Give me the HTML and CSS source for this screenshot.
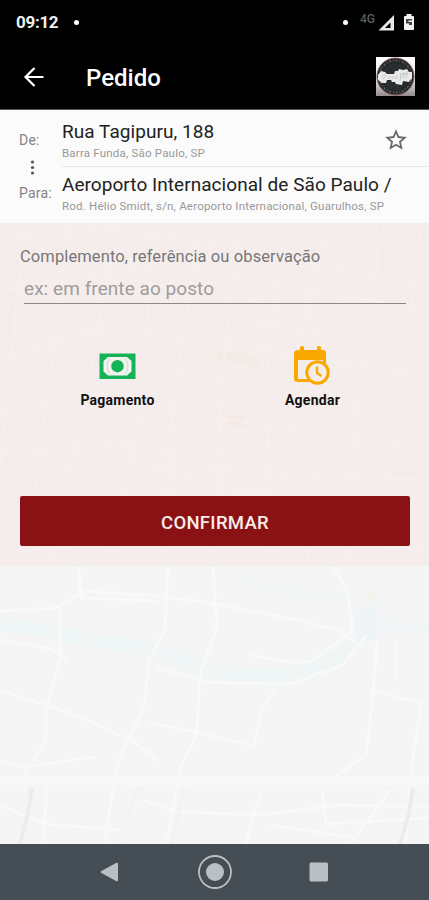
FILE: index.html
```html
<!DOCTYPE html>
<html lang="pt-BR">
<head>
    <meta charset="UTF-8">
    <meta name="viewport" content="width=device-width, initial-scale=1.0">
    <title>Pedido</title>
    <link rel="stylesheet" href="styles.css">
</head>
<body>
    <div class="status-bar">
        <span class="clock">09:12</span>
        <span class="dot"></span>
        <div class="status-icons">
            <span class="dot"></span>
            <span class="network">4G</span>
            <svg class="signal" width="17" height="17" viewBox="0 0 17 17">
                <path d="M.5 16.500 16 1V16.500Z" fill="#e8e8e8"/>
                <path d="M7 14 12.500 8.500V14Z" fill="#000"/>
            </svg>
            <svg class="battery" width="12" height="18" viewBox="0 0 12 18">
                <path d="M3.500 1h5v2H10q1 0 1 1v12q0 1-1 1H2q-1 0-1-1V4q0-1 1-1h1.500Z" fill="#f2f2f2"/>
                <path d="M3 6h6v1.500H5.500V9H9v3H6v-1.500H3Z" fill="#444"/>
            </svg>
        </div>
    </div>

    <header class="app-bar">
        <svg class="back" width="24" height="24" viewBox="0 0 24 24" fill="none" stroke="#fff" stroke-width="2.2">
            <path d="M21.500 12H3.500M12.500 3 3.500 12l9 9"/>
        </svg>
        <h1>Pedido</h1>
        <svg class="logo" width="39" height="39" viewBox="0 0 39 39">
            <defs>
                <linearGradient id="logoBg" x1="0" y1="0" x2="0" y2="1">
                    <stop offset="0" stop-color="#fff"/>
                    <stop offset=".6" stop-color="#ddd"/>
                    <stop offset="1" stop-color="#928b8d"/>
                </linearGradient>
            </defs>
            <rect width="39" height="39" fill="url(#logoBg)"/>
            <circle cx="19.500" cy="19.500" r="18.500" fill="#25282a" stroke="#84515a"/>
            <circle cx="19.500" cy="19.500" r="16" fill="none" stroke="#5d6163" stroke-width="1.500" stroke-dasharray="2 1.500 1 2" stroke-dashoffset="3"/>
            <circle cx="19.500" cy="19.500" r="13.500" fill="#292d2f"/>
            <path d="M2 18l3-4 4 1 2 2 7 0 1-3 3 0 1-2 4 1 4-1 2 3 3 0 0 7-2 1-1 2-6-1-1 4-6-1-1-2-3 0-1-2-4 0-1 3-4 0-4-3Z" fill="#e9e9e9"/>
            <path d="M6 20q3-4 4-1l-3 3m6-3v3m3-3v3m2-3 2 3 2-3m3-2-1 7m4-9-1 6m4-7-1 7m-6-4h8" fill="none" stroke="#bbbdbe" stroke-width=".8"/>
        </svg>
    </header>

    <main class="content">
        <!-- street map behind the order form -->
        <svg class="map" width="429" height="734" viewBox="0 0 429 734" fill="none">
            <g class="water">
                <path d="M0 515C40 516 68 528 100 532S160 537 186 552C230 571 285 568 316 558Q340 548 358 528" stroke-width="15"/>
                <path d="M355 503q8-8 23-10v37q-15 3-25-5Z" fill="#eff5f6" stroke="none"/>
                <path d="M230 465Q290 487 350 486" stroke-width="8" opacity=".5"/>
                <path d="M375 515l54 3" stroke-width="13" opacity=".7"/>
            </g>
            <path d="M362 487l15-10-3 14-12 5Z" fill="#f1f5ee"/>
            <path d="M226 306l18-2 4 11-16 3Z" fill="#eee6c8"/>
            <path d="M215 240l48 6-5 11-44-8Z" fill="#f2e9d5"/>
            <g class="streets">
                <path d="M0 501l55-3 30-17 60 4 60 7 88 17 44 11 26 18"/>
                <path d="M168 457l-3 63-16 30-5 47-26 55-14 82M213 457l4 60-16 44-5 66-15 29-14 78"/>
                <path d="M79 457l2 31 78 3M60 498v50l-14 53v29l-20 32-2 20M2 530l50 9 15 11"/>
                <path d="M0 580l76 25 57 26 25 20M0 651l24 6 70-10M150 613l50 10 54 13 8-38 18-26"/>
                <path d="M156 558l53 14 80 2 52-18 26-31M377 530l-4 54-7 60-39 29M334 457l14 26 5 41"/>
                <path d="M370 580l51 13-10 70-6 71M396 531v40M250 545l40 7 20 0 42-30"/>
                <path d="M0 695l45 19 75 6M140 690l40 12 80 3 80-10 89 2M262 677l-16 57M322 682l4 32 103-6"/>
                <path d="M47 678l-4 56M270 715l80 12M390 680l-40 54"/>
            </g>
            <path class="avenue" d="M0 671h429"/>
            <path class="rail" d="M32 678l-4 25-8 31M413 678l-4 25-9 31"/>
            <path class="rail rail-thin" d="M137 676l-16 58M184 678l-12 56"/>
            <g class="blocks">
                <path d="M0 128l110-9 120 18 199 40M0 181l160-28 120 24 149 22M0 250l100-33 140 19 189 32"/>
                <path d="M0 300l90-16 170 31 169 25M0 345l110-11 140 30 179 6M0 397l210-20 219 28M0 442l160-12 269 8"/>
                <path d="M25 114L0 360M70 114L25 456M114 114L88 280 48 456M155 114l-14 177-31 165M201 114l-28 178-8 164"/>
                <path d="M239 114l-17 150-8 192M285 114l-19 160 7 182M330 114l-35 132 14 210M383 114l-29 193-5 149M421 114l-22 192-18 150"/>
                <path d="M130 310l78 16M125 330l75 15M121 350l72 15M250 210l70 15M249 190l64 14M315 290l75 14"/>
            </g>
            <g class="creek">
                <path d="M380 114l8 110-6 130M300 300l4 80M245 335l30 12 154 19M0 270l15-90"/>
            </g>
        </svg>

        <section class="route">
            <div class="route-labels">
                <span>De:</span>
                <svg width="5" height="17" viewBox="0 0 5 17" fill="#555">
                    <circle cx="2.500" cy="3" r="1.600"/>
                    <circle cx="2.500" cy="8.500" r="1.600"/>
                    <circle cx="2.500" cy="14" r="1.600"/>
                </svg>
                <span>Para:</span>
            </div>
            <div class="stops">
                <div class="stop origin">
                    <div>
                        <h2>Rua Tagipuru, 188</h2>
                        <p>Barra Funda, São Paulo, SP</p>
                    </div>
                    <svg class="star" width="26" height="26" viewBox="0 0 24 24" fill="#666">
                        <path d="M22 9.240l-7.190-.620L12 2 9.190 8.630 2 9.240l5.460 4.730L5.820 21 12 17.270 18.180 21l-1.630-7.030L22 9.240zM12 15.400l-3.760 2.270 1-4.280-3.320-2.880 4.380-.380L12 6.100l1.710 4.040 4.380.380-3.320 2.880 1 4.280L12 15.400z"/>
                    </svg>
                </div>
                <div class="stop destination">
                    <h2>Aeroporto Internacional de São Paulo /</h2>
                    <p>Rod. Hélio Smidt, s/n, Aeroporto Internacional, Guarulhos, SP</p>
                </div>
            </div>
        </section>

        <section class="order-form">
            <label for="note">Complemento, referência ou observação</label>
            <input id="note" type="text" placeholder="ex: em frente ao posto">
            <div class="options">
                <div class="option">
                    <svg width="44" height="44" viewBox="0 0 44 44">
                        <path d="M3.500 10.500h36v25.500h-36Z" fill="#15b357"/>
                        <path d="M12 14h19l4.500 4v10.500l-4.500 4H12l-4.500-4V18Z" fill="#f5f3ee"/>
                        <path d="M14 15q-6 8 0 16.500M29 15q6 8 0 16.500" fill="none" stroke="#b9e3c7"/>
                        <circle cx="21.500" cy="23.200" r="6.200" fill="#15b357"/>
                    </svg>
                    <span>Pagamento</span>
                </div>
                <div class="option">
                    <svg width="44" height="44" viewBox="0 0 44 44">
                        <path d="M9 4q2-2 4 0v3h13V4q2-2 4 0v3h2q3 0 3 3v11h-3v-4H7v19h11v3H7q-4 0-4-3V11q0-4 4-4h2Z" fill="#f8a800"/>
                        <circle cx="26.500" cy="29.500" r="10.700" fill="#f7ecea" stroke="#f8a800" stroke-width="3"/>
                        <path d="M26 23.500v6.500l4.500 3" fill="none" stroke="#f8a800" stroke-width="2.300"/>
                    </svg>
                    <span>Agendar</span>
                </div>
            </div>
            <button class="confirm" type="button">CONFIRMAR</button>
        </section>
    </main>

    <nav class="system-nav">
        <svg width="429" height="56" viewBox="0 0 429 56" fill="#b9c0c5">
            <path d="M101.500 27 116 19q2-1 2 1v16q0 2-2 1l-14.500-8q-2-1 0-2Z"/>
            <circle cx="215" cy="28" r="9"/>
            <circle cx="215" cy="28" r="16" fill="none" stroke="#b9c0c5" stroke-width="1.800"/>
            <rect x="309.500" y="18.500" width="18.500" height="19" rx="1.500"/>
        </svg>
    </nav>
</body>
</html>
```
FILE: styles.css
```css
* {
    margin: 0;
    padding: 0;
    box-sizing: border-box;
    font-family: Roboto, "Liberation Sans", sans-serif;
}
body {
    display: flex;
    flex-direction: column;
    height: 900px;
    background: #f5f5f5;
    color: #222;
    overflow: hidden;
}
.status-bar {
    display: flex;
    align-items: center;
    height: 44px;
    padding: 0 14px 0 16px;
    background: #000;
    color: #f0f0f0;
}
.clock {
    width: 42px;
    font-size: 17px;
    font-weight: 700;
    letter-spacing: -0.3px;
}
.dot {
    width: 5px;
    height: 5px;
    margin-left: 16px;
    border-radius: 50%;
    background: #fff;
}
.status-icons {
    display: flex;
    align-items: center;
    margin-left: auto;
}
.network {
    width: 18px;
    margin: -6px 0 0 12px;
    color: #5d5d5d;
    font-size: 12px;
    font-weight: 500;
}
.battery {
    margin-left: 8px;
}

.app-bar {
    display: flex;
    align-items: center;
    height: 66px;
    padding: 0 14px 0 22px;
    background: #000;
    border-bottom: 1px solid #555;
    color: #fff;
}
.app-bar h1 {
    margin: 2px 0 0 40px;
    font-size: 24px;
    font-weight: 500;
}
.logo {
    margin-left: auto;
}

.content {
    position: relative;
    flex: 1;
}
/* the map lies under the whole content area */
.map {
    position: absolute;
    left: 0;
    top: 0;
}
.water {
    stroke: #f0f5f6;
}
.streets {
    stroke: #f8f9f9;
    stroke-width: 3;
}
.avenue {
    stroke: #f9f9f9;
    stroke-width: 8;
}
.rail {
    stroke: #ececec;
    stroke-width: 4;
}
.rail-thin {
    stroke: #f0f4f4;
    stroke-width: 3;
}
.blocks {
    stroke: #fff;
    stroke-width: 2;
}
.creek {
    stroke: #e4edf0;
    stroke-width: 3;
}

.route {
    position: relative;
    display: flex;
    height: 114px;
    background: #fbfbfb;
    border-bottom: 1px solid #f1eded;
}
.route-labels {
    display: flex;
    flex-direction: column;
    width: 62px;
    padding: 21px 0 0 19px;
    color: #858585;
    font-size: 14px;
    letter-spacing: 0.2px;
    line-height: 18px;
}
.route-labels svg {
    margin: 10px 0 8px 11px;
}
.stops {
    flex: 1;
}
.stop {
    white-space: nowrap;
}
.stop h2 {
    font-size: 19px;
    font-weight: 400;
    letter-spacing: 0.05px;
    line-height: 24px;
}
.stop p {
    color: #999;
    font-size: 11.5px;
    letter-spacing: 0.2px;
    line-height: 18px;
}
.origin {
    display: flex;
    justify-content: space-between;
    height: 57px;
    padding: 10px 20px 0 0;
    border-bottom: 1px solid #e9e9e9;
}
.star {
    margin-top: 7px;
}
.destination {
    padding-top: 6px;
}

.order-form {
    position: relative;
    display: flex;
    flex-direction: column;
    height: 342px;
    padding: 22px 19px 20px 20px;
    background: rgba(245, 235, 234, 0.8);
}
.order-form label {
    color: #777;
    font-size: 16.5px;
    letter-spacing: 0.1px;
    line-height: 22px;
}
.order-form input {
    height: 36px;
    margin: 0 4px;
    padding-top: 6px;
    border: none;
    border-bottom: 1px solid #8d8888;
    outline: none;
    background: none;
    color: #333;
    font-size: 19px;
    letter-spacing: 0.06px;
}
.order-form input::placeholder {
    color: #a09b9b;
}
.options {
    display: flex;
    margin-top: 39px;
}
.option {
    display: flex;
    flex: 1;
    flex-direction: column;
    align-items: center;
    color: #111;
    font-size: 14px;
    font-weight: 700;
    letter-spacing: 0.25px;
    line-height: 20px;
}
.option span {
    margin-top: 3px;
}
.confirm {
    height: 50px;
    margin-top: auto;
    padding-top: 4px;
    border: none;
    border-radius: 2px;
    background: #8b1214;
    color: #f9ecea;
    font-size: 18.5px;
    font-weight: 500;
    letter-spacing: 0.3px;
}

.system-nav {
    height: 56px;
    background: #454d55;
}
```
